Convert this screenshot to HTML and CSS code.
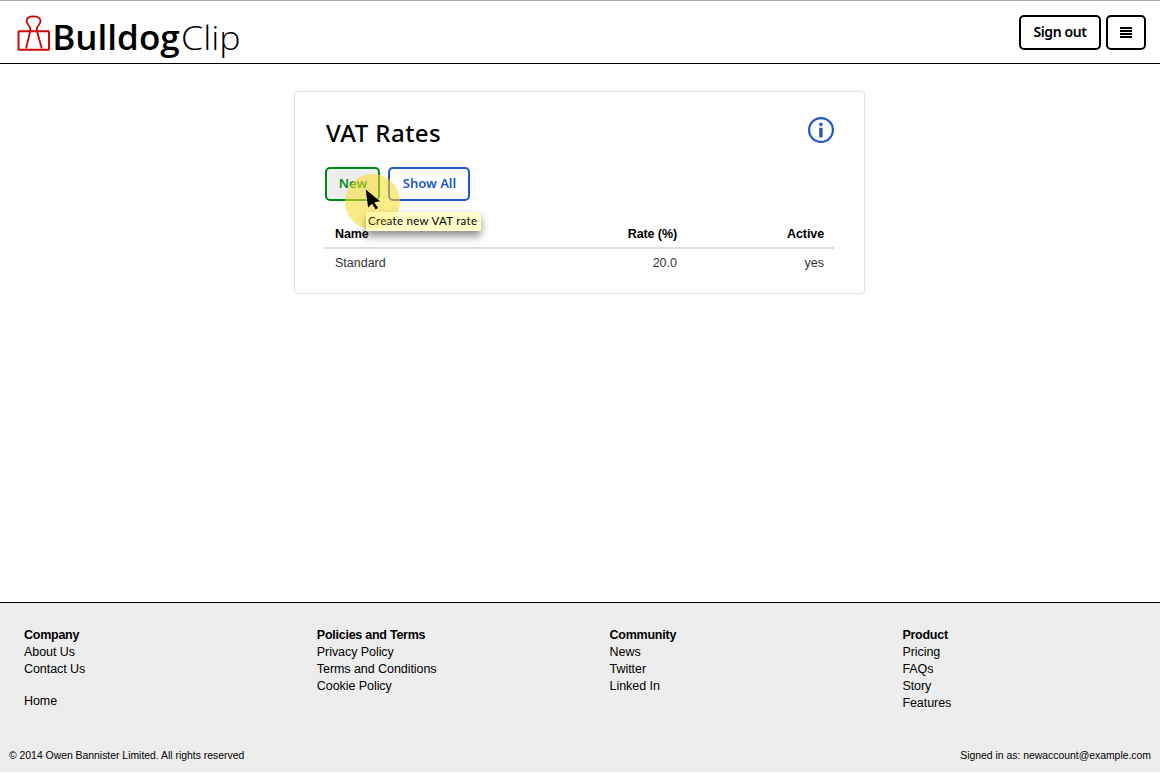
FILE: index.html
```html
<!DOCTYPE html>
<html lang="en">
<head>
<meta charset="utf-8">
<title>BulldogClip - VAT Rates</title>
<link rel="stylesheet" href="styles.css">
</head>
<body>
<header class="topbar">
  <a class="brand">
    <svg class="brand-logo" width="230" height="50" viewBox="0 0 230 50">
      <g fill="none" stroke="#d00000" stroke-width="1.9" stroke-linejoin="round">
        <rect x="2.5" y="20.3" width="30.5" height="18.4" rx=".6"/>
        <path stroke-width="1.8" stroke-linecap="round" d="M10.2 36.8L14.4 19.5C15.3 14.8 10.6 13.8 10.6 10.3C10.6 7 13.8 5.4 17.5 5.4S24.5 7 24.5 10.3C24.5 13.8 19.8 14.8 20.8 19.5L25.6 36.8"/>
      </g>
      <text class="brand-bold" x="36.2" y="39" textLength="127.5" lengthAdjust="spacingAndGlyphs">Bulldog</text>
      <text class="brand-light" x="165" y="39" textLength="59.5" lengthAdjust="spacingAndGlyphs">Clip</text>
    </svg>
  </a>
  <nav class="top-actions">
    <button class="btn btn-signout">Sign out</button>
    <button class="btn btn-menu" aria-label="Menu"><svg width="12" height="12" viewBox="0 0 12 12"><path d="M0 1H12M0 4H12M0 7H12M0 10H12" stroke="#000" stroke-width="2"/></svg></button>
  </nav>
</header>
<main class="content">
  <section class="card">
    <div class="card-head">
      <h1>VAT Rates</h1>
      <svg class="info" width="26" height="26" viewBox="0 0 26 26"><circle cx="13" cy="13" r="11.9" fill="none" stroke="#2257c5" stroke-width="2.2"/><circle cx="12.9" cy="7.4" r="1.8" fill="#2257c5"/><path d="M11.2 10.7H14.6V20.5H11.2Z" fill="#2257c5"/></svg>
    </div>
    <div class="card-actions">
      <div class="new-wrap">
        <button class="btn btn-new">New</button>
        <span class="halo"></span>
        <span class="tooltip">Create new VAT rate</span>
        <span class="halo halo-top"></span>
        <svg class="pointer" width="16" height="22" viewBox="0 0 16 22"><path d="M.7 .5L15 12.2L9.3 13.2L13 19L10.6 20.4L7 14.8L3.1 18.4Z" fill="#000"/></svg>
      </div>
      <button class="btn btn-all">Show All</button>
    </div>
    <table class="rates">
      <thead><tr><th>Name</th><th class="num">Rate (%)</th><th class="num">Active</th></tr></thead>
      <tbody><tr><td>Standard</td><td class="num">20.0</td><td class="num">yes</td></tr></tbody>
    </table>
  </section>
</main>
<footer class="footer">
  <div class="columns">
    <div><strong>Company</strong><a>About Us</a><a>Contact Us</a><a class="home">Home</a></div>
    <div><strong>Policies and Terms</strong><a>Privacy Policy</a><a>Terms and Conditions</a><a>Cookie Policy</a></div>
    <div><strong>Community</strong><a>News</a><a>Twitter</a><a>Linked In</a></div>
    <div><strong>Product</strong><a>Pricing</a><a>FAQs</a><a>Story</a><a>Features</a></div>
  </div>
  <div class="legal"><span class="copyright">© 2014 Owen Bannister Limited. All rights reserved</span><span class="account">Signed in as: newaccount@example.com</span></div>
</footer>
</body>
</html>
```
FILE: styles.css
```css
* { box-sizing: border-box; }
body {
  margin: 0;
  height: 773px;
  display: flex;
  flex-direction: column;
  overflow: hidden;
  background: #fff;
  color: #000;
  font: 12.5px/17px "Liberation Sans", Arial, sans-serif;
}
.topbar {
  height: 64px;
  border-top: 1px solid #a6a6a6;
  border-bottom: 1px solid #000;
  display: flex;
  justify-content: space-between;
  padding: 10px 14px 0 16px;
}
.brand-logo { display: block; overflow: visible; }
.brand-bold { font: 600 33.5px "Open Sans", "Noto Sans", sans-serif; }
.brand-light { font: 300 33.5px "Open Sans", "Noto Sans", sans-serif; }
.top-actions { display: flex; gap: 5px; padding-top: 4px; }
.btn {
  height: 35px;
  margin: 0;
  padding: 0 0 1px;
  border: 2px solid #000;
  border-radius: 5px;
  background: #fff;
  color: #000;
  font: 600 14px/20px "Noto Sans", "Open Sans", sans-serif;
}
.btn-signout { width: 82px; letter-spacing: -.4px; }
.btn-menu { width: 40px; display: flex; align-items: center; justify-content: center; padding: 1px 0 0; }
.content { flex: 1; padding-top: 27px; }
.card {
  width: 571px;
  height: 203px;
  margin: 0 auto 0 294px;
  padding: 25px 30px 0;
  border: 1px solid #e1e1e1;
  border-radius: 4px;
  box-shadow: 0 0 1px #ddd;
}
.card-head { display: flex; justify-content: space-between; height: 50px; }
h1 { margin: 0 0 0 1px; font: 500 24px/32px "Noto Sans", "Open Sans", sans-serif; letter-spacing: .45px; }
.info { display: block; }
.card-actions { display: flex; gap: 8px; height: 34px; }
.new-wrap { position: relative; }
.card-actions .btn { height: 34px; font-size: 13px; padding: 0 0 3px 1px; }
.card-actions .btn-new { width: 55px; border-color: #00891b; background: #eee; color: #00891b; }
.card-actions .btn-all { width: 82px; border-color: #2257c5; color: #2257c5; }
.halo { position: absolute; left: 20px; top: 7px; width: 55px; height: 55px; border-radius: 50%; background: #f8dc2a; opacity: .45; }
.halo-top { opacity: .2; }
.tooltip {
  position: absolute;
  left: 41px;
  top: 45px;
  width: 115px;
  height: 19px;
  background: #ffffc9;
  box-shadow: 0 5px 9px rgba(0, 0, 0, .45);
  font: 11.5px/18px Lato, sans-serif;
  letter-spacing: .3px;
  padding-left: 2px;
  white-space: nowrap;
}
.pointer { position: absolute; left: 40px; top: 22px; }
.rates { width: 509px; margin-top: 22px; border-collapse: collapse; table-layout: fixed; }
.rates th, .rates td { padding: 0 10px; text-align: left; line-height: 17px; }
.rates th { height: 25px; vertical-align: top; border-bottom: 2px solid #ddd; padding-top: 3px; letter-spacing: -.1px; }
.rates td { height: 28px; color: #333; padding-top: 1px; }
.rates th:first-child { width: 190px; }
.rates th:nth-child(2) { width: 172px; }
.rates .num { text-align: right; }
.footer { height: 170px; margin-bottom: 1px; border-top: 1px solid #000; background: #ededed; }
.columns { display: grid; grid-template-columns: repeat(4, 292.8px); padding: 24px 0 0 24px; height: 142px; }
.columns div { display: flex; flex-direction: column; }
.columns a { letter-spacing: -.06px; }
.columns strong { letter-spacing: -.25px; }
.home { margin-top: 15px; }
.legal { display: flex; justify-content: space-between; padding: 3px 9px 0; font-size: 10.4px; line-height: 16px; }
```
